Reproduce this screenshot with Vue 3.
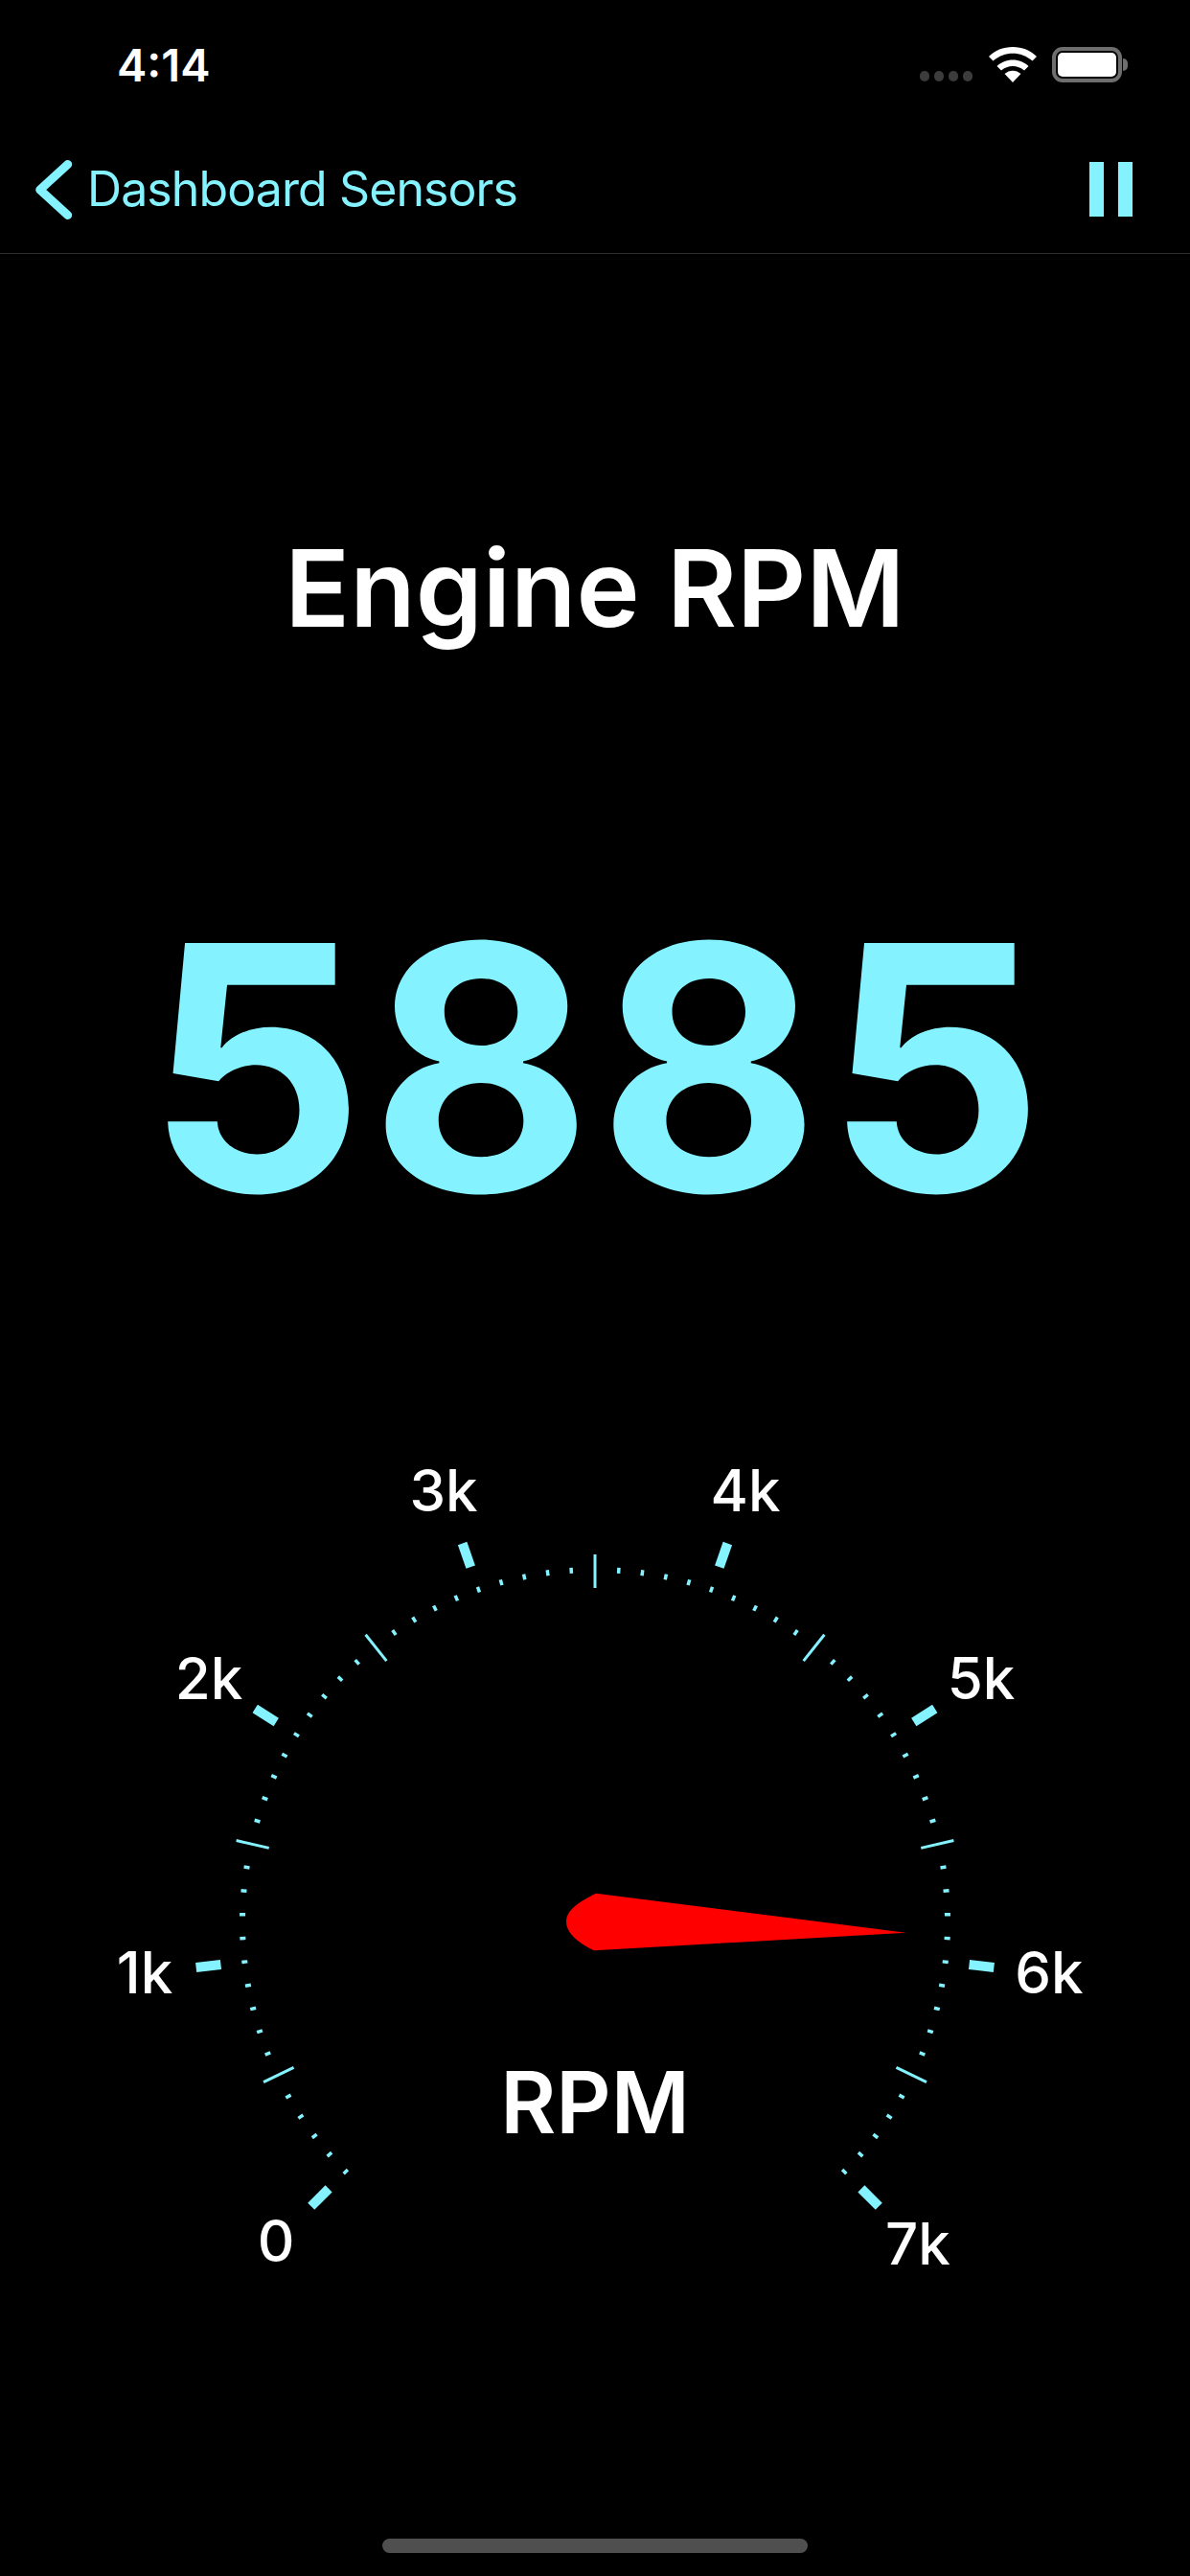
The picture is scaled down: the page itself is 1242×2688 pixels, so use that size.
<template>
  <div class="screen">
    <div class="status-bar">
      <span class="time">4:14</span>
      <div class="status-icons">
        <div class="signal"><i v-for="n in 4" :key="n"></i></div>
        <svg class="wifi" width="50" height="37" viewBox="0 0 50 37">
          <path d="M25 37 L16.5 28 C21.5 23.5 28.5 23.5 33.5 28 Z" fill="#fff" />
          <path d="M25 13.5 C31.5 13.5 37 16 41.5 20 L37 24.5 C30 18.5 20 18.5 13 24.5 L8.5 20 C13 16 18.5 13.5 25 13.5 Z" fill="#fff" />
          <path d="M25 0 C35 0 43.5 3.5 50 10 L45.5 14.5 C33.5 4 16.5 4 4.5 14.5 L0 10 C6.5 3.5 15 0 25 0 Z" fill="#fff" />
        </svg>
        <div class="battery">
          <div class="battery-fill"></div>
        </div>
        <div class="battery-nub"></div>
      </div>
    </div>

    <div class="nav-bar">
      <svg class="chevron" width="38" height="64" viewBox="0 0 38 64">
        <path d="M33.7 4.5 L4.7 31 L33.7 57.5" fill="none" stroke="#85f3ff" stroke-width="9" stroke-linecap="round" stroke-linejoin="round" />
      </svg>
      <span class="back-label">Dashboard Sensors</span>
      <div class="pause"><i></i><i></i></div>
    </div>

    <h1 class="title">Engine RPM</h1>
    <div class="value">5885</div>

    <svg class="gauge" width="1242" height="960" viewBox="0 1440 1242 960">
      <line
        v-for="t in ticks"
        :key="t.key"
        :x1="t.x1"
        :y1="t.y1"
        :x2="t.x2"
        :y2="t.y2"
        :stroke-width="t.width"
        stroke="#85f3ff"
      />
      <text
        v-for="l in labels"
        :key="l.text"
        :x="l.x"
        :y="l.y"
        class="gauge-label"
        text-anchor="middle"
      >{{ l.text }}</text>
      <text x="621" y="2226" class="gauge-unit" text-anchor="middle">RPM</text>
      <path
        d="M622 1975.7 L945.6 2016.7 L620 2035.3 C605 2028 591 2018 591 2005 C591 1993 605 1984 622 1975.7 Z"
        fill="#ff0000"
      />
    </svg>

    <div class="home-indicator"></div>
  </div>
</template>

<script setup>
const CX = 621
const CY = 2006
const SWEEP = 270 / 7

function point(angle, r) {
  const rad = (angle * Math.PI) / 180
  return { x: CX + r * Math.sin(rad), y: CY - r * Math.cos(rad) }
}

function makeTick(key, angle, r1, r2, width) {
  const a = point(angle, r1)
  const b = point(angle, r2)
  return { key, x1: a.x, y1: a.y, x2: b.x, y2: b.y, width }
}

const ticks = []
for (let i = 0; i <= 70; i++) {
  const angle = -135 + (i * SWEEP) / 10
  if (i % 10 === 5) {
    ticks.push(makeTick(`m${i}`, angle, 349, 384, 3))
  } else {
    ticks.push(makeTick(`s${i}`, angle, 365, 371, 3.5))
  }
  if (i % 10 === 0) {
    ticks.push(makeTick(`b${i}`, angle, 393, 419, 10))
  }
}

// label centres were not quite on one circle in the original
const labels = [
  { text: '0', x: 288, y: 2360 },
  { text: '1k', x: 151, y: 2080 },
  { text: '2k', x: 218, y: 1773 },
  { text: '3k', x: 463, y: 1577 },
  { text: '4k', x: 778, y: 1577 },
  { text: '5k', x: 1024, y: 1773 },
  { text: '6k', x: 1095, y: 2080 },
  { text: '7k', x: 958, y: 2363 }
]
</script>

<style>
html,
body {
  margin: 0;
  background: #000;
}
</style>

<style scoped>
.screen {
  width: 1242px;
  height: 2688px;
  background: #000;
  font-family: Inter, "Liberation Sans", sans-serif;
  color: #fff;
  overflow: hidden;
  position: relative;
}

.status-bar {
  height: 132px;
  display: flex;
  justify-content: space-between;
  padding: 44px 65px 0 122px;
  box-sizing: border-box;
}

.time {
  font-size: 47px;
  font-weight: 600;
  line-height: 47px;
}

.status-icons {
  display: flex;
  align-items: flex-start;
  padding-top: 5px;
  height: 37px;
}

.signal {
  display: flex;
  gap: 5px;
  margin-top: 25px;
  margin-right: 17px;
}

.signal i {
  width: 10px;
  height: 11px;
  border-radius: 5px;
  background: #3c3c3c;
}

.wifi {
  margin-right: 16px;
}

.battery {
  width: 73px;
  height: 37px;
  box-sizing: border-box;
  border: 4px solid #6e6e6e;
  border-radius: 11px;
  padding: 2px;
}

.battery-fill {
  height: 100%;
  background: #fff;
  border-radius: 5px;
}

.battery-nub {
  width: 5px;
  height: 13px;
  margin: 12px 0 0 1px;
  background: #6e6e6e;
  border-radius: 0 6px 6px 0;
}

.nav-bar {
  height: 133px;
  box-sizing: border-box;
  border-bottom: 1px solid #2e2e2e;
  padding: 0 60px 0 37px;
  display: flex;
  align-items: flex-start;
  color: #85f3ff;
}

.chevron {
  margin-top: 35px;
  margin-right: 16px;
}

.back-label {
  font-size: 50px;
  letter-spacing: -0.9px;
  line-height: 60px;
  margin-top: 35px;
}

.pause {
  margin-left: auto;
  margin-top: 37px;
  display: flex;
  gap: 15px;
}

.pause i {
  display: block;
  width: 15px;
  height: 57px;
  background: #85f3ff;
}

.title {
  margin: 278px 0 0;
  text-align: center;
  font-size: 112px;
  font-weight: 600;
  line-height: 140px;
}

.value {
  margin-top: 231px;
  padding-left: 6px;
  text-align: center;
  font-size: 356px;
  font-weight: 650;
  letter-spacing: 6px;
  line-height: 400px;
  color: #85f3ff;
}

.gauge {
  display: block;
  margin-top: 126px;
}

.gauge-label {
  font-size: 60px;
  font-weight: 500;
  fill: #fff;
}

.gauge-unit {
  font-size: 89px;
  font-weight: 600;
  fill: #fff;
}

.home-indicator {
  position: absolute;
  left: 399px;
  bottom: 24px;
  width: 444px;
  height: 15px;
  border-radius: 8px;
  background: #4f4f4f;
}
</style>
